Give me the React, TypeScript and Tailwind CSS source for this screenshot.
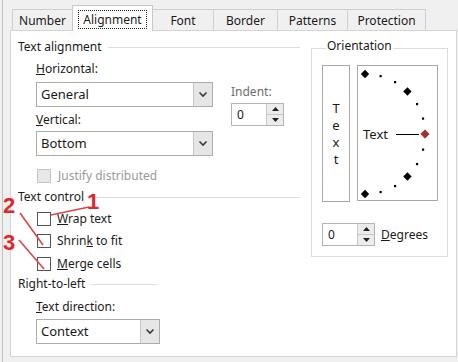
import React from "react";

const Chevron = () => (
  <svg width="10" height="7" viewBox="0 0 10 7">
    <path d="M1.5 1.5 L5 5 L8.5 1.5" fill="none" stroke="#3a3a3a" strokeWidth="1.6" />
  </svg>
);

const Select = ({ value, w }: { value: string; w: string }) => (
  <div className={`flex h-[25px] ${w} border border-[#acacac] bg-white`}>
    <div className="flex flex-1 items-center pl-[4px] text-[13px]">{value}</div>
    <div className="flex w-[19px] items-center justify-center border-l border-[#c8c8c8] bg-[#e6e6e6]">
      <Chevron />
    </div>
  </div>
);

const Spinner = () => (
  <div className="flex h-[23px] w-[53px] border border-[#b4b4b4] bg-white">
    <div className="flex flex-1 items-center pl-[5px]">0</div>
    <div className="flex w-[17px] flex-col border-l border-[#c8c8c8] bg-[#ececec]">
      <div className="flex flex-1 items-center justify-center border-b border-[#c8c8c8]">
        <svg width="7" height="4" viewBox="0 0 7 4"><polygon points="0,4 7,4 3.5,0" fill="#222" /></svg>
      </div>
      <div className="flex flex-1 items-center justify-center">
        <svg width="7" height="4" viewBox="0 0 7 4"><polygon points="0,0 7,0 3.5,4" fill="#222" /></svg>
      </div>
    </div>
  </div>
);

const Check = ({ disabled }: { disabled?: boolean }) => (
  <div
    className={
      disabled
        ? "h-[14px] w-[14px] border border-[#c4c4c4] bg-[#e8e8e8]"
        : "h-[14px] w-[14px] border border-[#555] bg-white"
    }
  />
);

const Header = ({ label, w }: { label: string; w: string }) => (
  <div className={`flex h-[16px] items-center ${w}`}>
    <span>{label}</span>
    <div className="ml-[6px] h-px flex-1 bg-[#dcdcdc]" />
  </div>
);

const Tab = ({ label, w, selected }: { label: string; w: string; selected?: boolean }) =>
  selected ? (
    <div className={`relative -mb-px flex h-[26px] ${w} -ml-px items-start justify-center border border-b-0 border-[#c8c8c8] bg-white pt-[4px]`}>
      <span className="border border-dotted border-[#222] px-[4px] leading-[17px]">{label}</span>
    </div>
  ) : (
    <div className={`flex h-[21px] ${w} -ml-px items-center justify-center border border-b-0 border-[#cfcfcf] bg-[#f0f0f0] pt-[1px]`}>
      {label}
    </div>
  );

const arc = () => {
  const cx = 7;
  const cy = 68;
  const r = 60;
  const items: React.ReactElement[] = [];
  for (let a = 90; a >= -90; a -= 15) {
    const rad = (a * Math.PI) / 180;
    const x = cx + r * Math.cos(rad);
    const y = cy - r * Math.sin(rad);
    if (a % 45 === 0) {
      const s = 4.2;
      const fill = a === 0 ? "#b02a2a" : "#000";
      items.push(
        <polygon
          key={a}
          points={`${x},${y - s} ${x + s},${y} ${x},${y + s} ${x - s},${y}`}
          fill={fill}
          stroke={a === 0 ? "#7a1a1a" : "none"}
          strokeWidth={a === 0 ? 0.6 : 0}
        />
      );
    } else {
      items.push(<rect key={a} x={x - 1} y={y - 1} width={2.2} height={2.2} fill="#000" />);
    }
  }
  return items;
};

export default function App() {
  return (
    <div className="relative h-[362px] w-[458px] overflow-hidden bg-[#f0f0f0] font-['Noto_Sans','Liberation_Sans',sans-serif] text-[12px] leading-none text-[#1a1a1a]">
      <div className="ml-[2px] h-full border-l border-[#c4c4c4] pl-[7px] pr-[1px] pt-[5px]">
        {/* tabs */}
        <div className="relative z-10 flex h-[25px] items-end pl-[3px]">
          <Tab label="Number" w="w-[61px]" />
          <Tab label="Alignment" w="w-[81px]" selected />
          <Tab label="Font" w="w-[62px]" />
          <Tab label="Border" w="w-[65px]" />
          <Tab label="Patterns" w="w-[71px]" />
          <Tab label="Protection" w="w-[79px]" />
        </div>
        {/* panel */}
        <div className="flex h-[327px] border border-[#d4d4d4] bg-white">
          {/* left column */}
          <div className="flex w-[289px] flex-col pl-[7px] pt-[8px]">
            <Header label="Text alignment" w="w-[282px]" />
            <div className="ml-[18px] flex">
              <div className="flex w-[177px] flex-col">
                <div className="mt-[6px] flex h-[16px] items-center">
                  <span><u>H</u>orizontal:</span>
                </div>
                <div className="mt-[5px]"><Select value="General" w="w-[177px]" /></div>
                <div className="mt-[5px] flex h-[16px] items-center">
                  <span><u>V</u>ertical:</span>
                </div>
                <div className="mt-[3px]"><Select value="Bottom" w="w-[177px]" /></div>
              </div>
              <div className="ml-[18px] flex flex-col pt-[29px]">
                <div className="flex h-[16px] items-center text-[#6d6d6d]">Indent:</div>
                <div className="mt-[3px]"><Spinner /></div>
              </div>
            </div>
            <div className="ml-[19px] mt-[12px] flex h-[16px] items-center">
              <Check disabled />
              <span className="ml-[7px] text-[#9a9a9a]">Justify distributed</span>
            </div>
            <div className="mt-[5px]"><Header label="Text control" w="w-[282px]" /></div>
            <div className="ml-[19px] mt-[6px] flex h-[16px] items-center">
              <Check />
              <span className="ml-[6px]"><u>W</u>rap text</span>
            </div>
            <div className="ml-[19px] mt-[6px] flex h-[16px] items-center">
              <Check />
              <span className="ml-[6px]">Shrin<u>k</u> to fit</span>
            </div>
            <div className="ml-[19px] mt-[7px] flex h-[16px] items-center">
              <Check />
              <span className="ml-[6px]"><u>M</u>erge cells</span>
            </div>
            <div className="mt-[4px]"><Header label="Right-to-left" w="w-[139px]" /></div>
            <div className="ml-[18px] mt-[7px] flex h-[16px] items-center">
              <span><u>T</u>ext direction:</span>
            </div>
            <div className="ml-[18px] mt-[4px]"><Select value="Context" w="w-[124px]" /></div>
          </div>
          {/* orientation */}
          <fieldset className="ml-[11px] mt-[7px] h-[219px] w-[137px] border border-[#dcdcdc] pl-[10px]">
            <legend className="ml-[4px] h-[20px] px-[1px] pb-[4px] leading-[16px]">Orientation</legend>
            <div className="mt-[7px] flex">
              <div className="flex h-[137px] w-[28px] flex-col items-center justify-center border border-[#a8a8a8] text-[13px] leading-[17px]">
                <span>T</span>
                <span>e</span>
                <span>x</span>
                <span>t</span>
              </div>
              <div className="relative ml-[7px] h-[136px] w-[81px] border border-[#a8a8a8]">
                <svg className="absolute left-0 top-0" width="80" height="135" viewBox="0 0 80 135">
                  {arc()}
                  <line x1="38" y1="68.5" x2="61" y2="68.5" stroke="#000" strokeWidth="1" />
                </svg>
                <span className="absolute left-[5px] top-[60px] text-[13px] leading-[16px]">Text</span>
              </div>
            </div>
            <div className="mt-[21px] flex items-center">
              <Spinner />
              <span className="ml-[6px]"><u>D</u>egrees</span>
            </div>
          </fieldset>
        </div>
      </div>
      {/* red annotations */}
      <svg className="pointer-events-none absolute left-0 top-0" width="458" height="362">
        <line x1="51" y1="215" x2="89" y2="207" stroke="#d9474a" strokeWidth="1.6" />
        <line x1="20" y1="213" x2="43" y2="245" stroke="#d9474a" strokeWidth="1.6" />
        <line x1="19" y1="240" x2="44" y2="269" stroke="#d9474a" strokeWidth="1.6" />
      </svg>
      <div className="pointer-events-none absolute left-[87px] top-[192px] font-['Liberation_Sans',sans-serif] text-[22px] font-bold leading-[20px] text-[#e0262b]">1</div>
      <div className="pointer-events-none absolute left-[3px] top-[195px] font-['Liberation_Sans',sans-serif] text-[22px] font-bold leading-[22px] text-[#e0262b]">2</div>
      <div className="pointer-events-none absolute left-[3px] top-[232px] font-['Liberation_Sans',sans-serif] text-[22px] font-bold leading-[22px] text-[#e0262b]">3</div>
    </div>
  );
}
